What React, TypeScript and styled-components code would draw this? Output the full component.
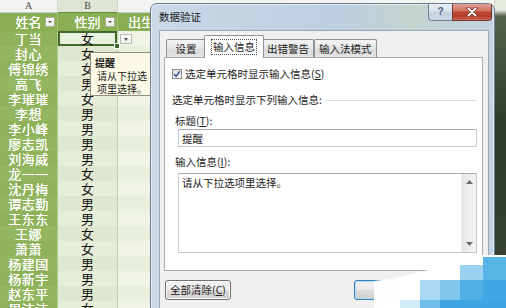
import React from 'react';
import styled, { createGlobalStyle } from 'styled-components';

const GlobalStyle = createGlobalStyle`
  html, body {
    margin: 0;
    padding: 0;
    background: #fff;
  }
  body {
    font-family: "Noto Sans CJK SC", "Noto Sans", sans-serif;
  }
`;

type Sex = '男' | '女';

interface Person {
  name: string;
  sex: Sex;
}

const people: Person[] = [
  { name: '丁当', sex: '女' },
  { name: '封心', sex: '女' },
  { name: '傅锦绣', sex: '女' },
  { name: '高飞', sex: '男' },
  { name: '李璀璀', sex: '女' },
  { name: '李想', sex: '男' },
  { name: '李小峰', sex: '男' },
  { name: '廖志凯', sex: '男' },
  { name: '刘海威', sex: '男' },
  { name: '龙一一', sex: '女' },
  { name: '沈丹梅', sex: '女' },
  { name: '谭志勤', sex: '男' },
  { name: '王东东', sex: '男' },
  { name: '王娜', sex: '女' },
  { name: '萧萧', sex: '女' },
  { name: '杨建国', sex: '男' },
  { name: '杨新宇', sex: '男' },
  { name: '赵东平', sex: '男' },
  { name: '周洁洁', sex: '女' },
];

const tabs = ['设置', '输入信息', '出错警告', '输入法模式'];

export default function App() {
  return (
    <>
      <GlobalStyle />
      <Screen>
        <Sheet>
          <ColumnLetter>A</ColumnLetter>
          <ColumnLetter $active>B</ColumnLetter>
          <ColumnLetter />

          <HeaderCell>
            <HeaderText>姓名</HeaderText>
            <FilterButton />
          </HeaderCell>
          <HeaderCell>
            <HeaderText>性别</HeaderText>
            <FilterButton />
          </HeaderCell>
          <HeaderCell $left>
            <HeaderText $left>出生</HeaderText>
          </HeaderCell>

          {people.map((p, i) => (
            <React.Fragment key={p.name}>
              <NameCell $odd={i % 2 === 1}>{p.name}</NameCell>
              <SexCell $odd={i % 2 === 1} $selected={i === 0}>
                {p.sex}
                {i === 0 && (
                  <>
                    <ListArrow />
                    <Tooltip>
                      <TipTitle>提醒</TipTitle>
                      <TipLine>请从下拉选</TipLine>
                      <TipLine>项里选择。</TipLine>
                    </Tooltip>
                  </>
                )}
              </SexCell>
              <BlankCell $odd={i % 2 === 1} />
            </React.Fragment>
          ))}
        </Sheet>
        <EdgeStrip />

        <Dialog>
          <TitleBar>
            <Title>数据验证</Title>
            <Caption>
              <HelpButton>?</HelpButton>
              <CloseButton>
                <svg width="12" height="10" viewBox="0 0 12 10">
                  <path d="M2.5 1.5 L9.5 8.5 M9.5 1.5 L2.5 8.5" stroke="#7a2d24" strokeWidth="3.6" strokeLinecap="round" />
                  <path d="M2.5 1.5 L9.5 8.5 M9.5 1.5 L2.5 8.5" stroke="#ffffff" strokeWidth="2" strokeLinecap="round" />
                </svg>
              </CloseButton>
            </Caption>
          </TitleBar>

          <Client>
            <TabStrip>
              {tabs.map((t) => (
                <Tab key={t} $active={t === '输入信息'}>
                  {t === '输入信息' ? <FocusText>{t}</FocusText> : t}
                </Tab>
              ))}
            </TabStrip>

            <Panel>
              <CheckRow>
                <CheckBox>
                  <svg width="8" height="8" viewBox="0 0 8 8">
                    <path d="M1 4.2 L3 6.3 L7 1.2" fill="none" stroke="#3a5797" strokeWidth="1.6" />
                  </svg>
                </CheckBox>
                <span>
                  选定单元格时显示输入信息(<u>S</u>)
                </span>
              </CheckRow>

              <GroupHeader>
                <span>选定单元格时显示下列输入信息:</span>
                <GroupLine />
              </GroupHeader>

              <FieldLabel>
                标题(<u>T</u>):
              </FieldLabel>
              <TextBox>提醒</TextBox>

              <FieldLabel>
                输入信息(<u>I</u>):
              </FieldLabel>
              <Memo>
                <MemoText>请从下拉选项里选择。</MemoText>
                <ScrollBar>
                  <ScrollArrow>
                    <svg width="7" height="4" viewBox="0 0 7 4">
                      <path d="M0 4 L3.5 0 L7 4 Z" fill="#6b6b6b" />
                    </svg>
                  </ScrollArrow>
                  <ScrollArrow>
                    <svg width="7" height="4" viewBox="0 0 7 4">
                      <path d="M0 0 L3.5 4 L7 0 Z" fill="#6b6b6b" />
                    </svg>
                  </ScrollArrow>
                </ScrollBar>
              </Memo>
            </Panel>

            <ButtonRow>
              <DialogButton $width={66}>
                全部清除(<u>C</u>)
              </DialogButton>
              <ButtonGroup>
                <DialogButton $width={66} $default>
                  确定
                </DialogButton>
                <DialogButton $width={58}>取消</DialogButton>
              </ButtonGroup>
            </ButtonRow>
          </Client>
        </Dialog>

        <Watermark width="135" height="55" viewBox="0 0 135 55">
          <defs>
            <linearGradient id="wm-fade" x1="0" x2="1" y1="0" y2="0">
              <stop offset="0" stopColor="#ffffff" stopOpacity="0.97" />
              <stop offset="0.2" stopColor="#ffffff" stopOpacity="1" />
            </linearGradient>
          </defs>
          <polygon points="3,55 3,28 20,26 66,15 112,2 135,2 135,55" fill="url(#wm-fade)" />
          <rect x="112" y="4" width="23" height="23" fill="#58b3e6" />
          <rect x="89" y="12" width="23" height="15" fill="#9bd2f1" />
          <rect x="49" y="27" width="20" height="20" fill="#aad9f3" />
          <rect x="69" y="27" width="20" height="20" fill="#80c6ed" />
          <rect x="89" y="27" width="23" height="20" fill="#50b0e6" />
          <rect x="112" y="27" width="23" height="20" fill="#3fa8e2" />
          <rect x="29" y="47" width="20" height="8" fill="#d2ebf8" />
          <rect x="49" y="47" width="20" height="8" fill="#6ebee9" />
          <rect x="69" y="47" width="66" height="8" fill="#3ca6e1" />
        </Watermark>
      </Screen>
    </>
  );
}

const Screen = styled.div`
  position: relative;
  width: 506px;
  height: 308px;
  overflow: hidden;
  display: flex;
`;

/* ---------- spreadsheet ---------- */

const Sheet = styled.div`
  flex: 1;
  display: grid;
  grid-template-columns: 58px 60px 1fr;
  grid-template-rows: 13px 18px;
  grid-auto-rows: 15px;
  align-content: start;
  background: #eef3e6;
`;

const ColumnLetter = styled.div<{ $active?: boolean }>`
  display: flex;
  align-items: center;
  justify-content: center;
  box-sizing: border-box;
  background: ${(p) => (p.$active ? '#dfe5d5' : '#f3f4f1')};
  border-right: 1px solid #d2d6cd;
  border-bottom: 1px solid ${(p) => (p.$active ? '#5f8f3e' : '#c9cdc4')};
  color: #474747;
  font: 10px/1 "Liberation Serif", serif;
`;

const HeaderCell = styled.div<{ $left?: boolean }>`
  display: flex;
  align-items: center;
  box-sizing: border-box;
  min-width: 0;
  padding-left: ${(p) => (p.$left ? '10px' : '12px')};
  background: #8aae52;
  border-right: 1px solid #a4c07a;
  color: #fff;
  font-size: 13px;
  white-space: nowrap;
  text-shadow: 0 0 0.6px #fff;
`;

const HeaderText = styled.span<{ $left?: boolean }>`
  flex: 1;
  text-align: ${(p) => (p.$left ? 'left' : 'center')};
  line-height: 18px;
`;

const FilterButton = styled.span`
  position: relative;
  flex: none;
  width: 10px;
  height: 10px;
  margin-right: 2px;
  box-sizing: border-box;
  background: linear-gradient(#ffffff, #e9ece6);
  border: 1px solid #a8b3a0;

  &::after {
    content: '';
    position: absolute;
    left: 2px;
    top: 3px;
    border-left: 2px solid transparent;
    border-right: 2px solid transparent;
    border-top: 2px solid #4a4a4a;
  }
`;

const NameCell = styled.div<{ $odd: boolean }>`
  display: flex;
  align-items: center;
  justify-content: center;
  box-sizing: border-box;
  background: ${(p) => (p.$odd ? '#93b660' : '#8eb25a')};
  border-right: 1px solid #b2ca8e;
  color: #fff;
  font-size: 13px;
  line-height: 15px;
  letter-spacing: 0.5px;
  white-space: nowrap;
  text-shadow: 0 0 0.6px #fff;
`;

const SexCell = styled.div<{ $odd: boolean; $selected?: boolean }>`
  position: ${(p) => (p.$selected ? 'relative' : 'static')};
  z-index: ${(p) => (p.$selected ? 3 : 'auto')};
  display: flex;
  align-items: center;
  justify-content: center;
  box-sizing: border-box;
  background: ${(p) => (p.$selected ? '#e9f0de' : p.$odd ? '#dfe8cf' : '#e6eed9')};
  border-right: 1px solid #c2d0ab;
  box-shadow: ${(p) => (p.$selected ? 'inset 0 0 0 2px #3e6a2c' : 'none')};
  color: #111;
  font-size: 13px;
  line-height: 15px;

  &::after {
    content: '';
    display: ${(p) => (p.$selected ? 'block' : 'none')};
    position: absolute;
    right: -3px;
    bottom: -3px;
    width: 4px;
    height: 4px;
    background: #3e6a2c;
    border: 1px solid #fff;
  }
`;

const BlankCell = styled.div<{ $odd: boolean }>`
  background: ${(p) => (p.$odd ? '#e8efdc' : '#eff4e7')};
`;

const ListArrow = styled.span`
  position: absolute;
  left: 62px;
  top: 3px;
  width: 12px;
  height: 10px;
  box-sizing: border-box;
  background: linear-gradient(#ffffff, #eceeea);
  border: 1px solid #b8bdb3;

  &::after {
    content: '';
    position: absolute;
    left: 3px;
    top: 3px;
    border-left: 2.5px solid transparent;
    border-right: 2.5px solid transparent;
    border-top: 3px solid #555;
  }
`;

const Tooltip = styled.div`
  position: absolute;
  left: 32px;
  top: 21px;
  width: 66px;
  height: 44px;
  box-sizing: border-box;
  padding: 3px 4px;
  background: #fbf9e5;
  border: 1px solid #8f8e7f;
  color: #222;
  font-size: 10px;
  line-height: 13px;
  text-align: left;
  white-space: nowrap;
`;

const TipTitle = styled.div`
  font-weight: 700;
`;

const TipLine = styled.div`
  padding-left: 2px;
`;

const EdgeStrip = styled.div`
  width: 11px;
  flex: none;
  background: linear-gradient(#e6ebe2 0, #e6ebe2 10px, #56634b 16px, #2f3a2a 40%, #3a4434 100%);
`;

/* ---------- dialog ---------- */

const Dialog = styled.div`
  position: absolute;
  left: 150px;
  top: 3px;
  z-index: 5;
  width: 345px;
  height: 320px;
  box-sizing: border-box;
  display: flex;
  flex-direction: column;
  padding: 0 5px 0 8px;
  border: 1px solid #6d7c8c;
  border-radius: 7px 7px 0 0;
  background: linear-gradient(to right, #cad8e7, #bdcfe2 55%, #c4d4cd 76%, #c3d3e4);
  box-shadow: inset 0 0 0 1px rgba(255, 255, 255, 0.55);
  font-size: 10.5px;
  color: #1b1b1b;
`;

const TitleBar = styled.div`
  height: 26px;
  flex: none;
  display: flex;
  align-items: flex-start;
  justify-content: space-between;
`;

const Title = styled.div`
  margin-top: 7px;
  line-height: 12px;
`;

const Caption = styled.div`
  display: flex;
  margin-right: -3px;
`;

const HelpButton = styled.div`
  width: 24px;
  height: 17px;
  box-sizing: border-box;
  display: flex;
  align-items: center;
  justify-content: center;
  border: 1px solid #6e7f93;
  border-top: none;
  border-right: none;
  border-radius: 0 0 0 4px;
  background: linear-gradient(#e9eff6, #d4dfeb 50%, #c3d1e1 51%, #ccd9e7);
  color: #4f5f73;
  font: 700 10px/1 "Liberation Sans", sans-serif;
`;

const CloseButton = styled.div`
  width: 40px;
  height: 17px;
  box-sizing: border-box;
  display: flex;
  align-items: center;
  justify-content: center;
  border: 1px solid #6b3a33;
  border-top: none;
  border-radius: 0 0 4px 0;
  background: linear-gradient(#e3a397, #d0705f 45%, #c2432f 50%, #b8402d 80%, #d3695a);
`;

const Client = styled.div`
  flex: 1;
  display: flex;
  flex-direction: column;
  padding: 4px 5px 0 4px;
  background: #f0f0f0;
  border: 1px solid #9aa8b8;
`;

const TabStrip = styled.div`
  position: relative;
  z-index: 1;
  height: 23px;
  flex: none;
  display: flex;
  align-items: flex-end;
  padding-left: 2px;
`;

const Tab = styled.div<{ $active?: boolean }>`
  position: relative;
  z-index: ${(p) => (p.$active ? 2 : 1)};
  min-width: 40px;
  height: ${(p) => (p.$active ? '23px' : '18px')};
  margin: ${(p) => (p.$active ? '0 -2px' : '0 0 1px 0')};
  padding: ${(p) => (p.$active ? '0 8px' : '0 4px')};
  box-sizing: border-box;
  display: flex;
  align-items: center;
  justify-content: center;
  background: ${(p) => (p.$active ? '#ffffff' : 'linear-gradient(#f3f3f3, #e6e6e6 50%, #dcdcdc 51%, #e2e2e2)')};
  border: 1px solid #8e939b;
  border-bottom: none;
  border-radius: 2px 2px 0 0;
  white-space: nowrap;
  line-height: 12px;
`;

const FocusText = styled.span`
  outline: 1px dotted #555;
  outline-offset: 1px;
`;

const Panel = styled.div`
  height: 214px;
  flex: none;
  margin-top: -1px;
  box-sizing: border-box;
  display: flex;
  flex-direction: column;
  padding: 10px 5px 0 7px;
  background: #ffffff;
  border: 1px solid #a9adb3;
`;

const CheckRow = styled.div`
  height: 11px;
  display: flex;
  align-items: center;
  gap: 3px;
  line-height: 12px;
  white-space: nowrap;
`;

const CheckBox = styled.span`
  width: 10px;
  height: 10px;
  box-sizing: border-box;
  display: flex;
  align-items: center;
  justify-content: center;
  border: 1px solid #8f8f8f;
  background: linear-gradient(135deg, #dcdcdc, #fbfbfb);
`;

const GroupHeader = styled.div`
  height: 12px;
  margin-top: 15px;
  display: flex;
  align-items: center;
  gap: 3px;
  line-height: 12px;
  white-space: nowrap;
`;

const GroupLine = styled.span`
  flex: 1;
  border-top: 1px solid #d5dfe5;
`;

const FieldLabel = styled.div`
  height: 12px;
  margin: 9px 0 0 3px;
  line-height: 12px;
`;

const TextBox = styled.div`
  width: 299px;
  height: 18px;
  margin: 2px 0 0 6px;
  box-sizing: border-box;
  display: flex;
  align-items: center;
  padding-left: 3px;
  border: 1px solid #c5c9cf;
  border-top-color: #a7abb1;
`;

const Memo = styled(TextBox)`
  height: 80px;
  align-items: stretch;
  padding-left: 0;
  margin-top: 5px;
`;

const MemoText = styled.div`
  flex: 1;
  padding: 3px 3px;
  line-height: 12px;
`;

const ScrollBar = styled.div`
  width: 14px;
  display: flex;
  flex-direction: column;
  justify-content: space-between;
  background: linear-gradient(to right, #e6e6e6, #f4f4f4);
  border-left: 1px solid #eaeaea;
`;

const ScrollArrow = styled.div`
  height: 16px;
  display: flex;
  align-items: center;
  justify-content: center;
`;

const ButtonRow = styled.div`
  margin-top: 9px;
  padding-left: 1px;
  display: flex;
  justify-content: space-between;
`;

const ButtonGroup = styled.div`
  display: flex;
  gap: 5px;
`;

const DialogButton = styled.div<{ $width: number; $default?: boolean }>`
  width: ${(p) => p.$width}px;
  height: 20px;
  box-sizing: border-box;
  display: flex;
  align-items: center;
  justify-content: center;
  border: 1px solid ${(p) => (p.$default ? '#3c7fb1' : '#707070')};
  border-radius: 3px;
  background: linear-gradient(#f2f2f2, #ebebeb 50%, #dddddd 51%, #cfcfcf);
  box-shadow: inset 0 0 0 1px ${(p) => (p.$default ? '#a9dbf6' : '#fbfbfb')};
  white-space: nowrap;
  line-height: 12px;
`;

const Watermark = styled.svg`
  position: absolute;
  right: 0;
  bottom: 0;
  z-index: 10;
`;
